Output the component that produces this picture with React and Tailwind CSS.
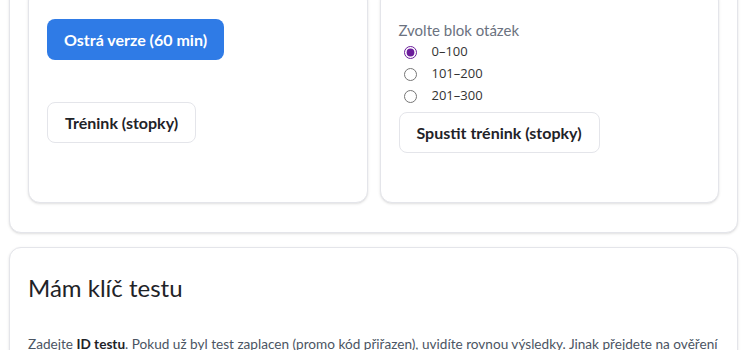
import React from "react";

export default function App() {
  return (
    <div className="min-h-[350px] w-[750px] overflow-hidden bg-white font-['Lato',_sans-serif] text-[#1f2328]">
      <div className="-mt-[30px] pl-[9px] pr-[12px]">
        <div className="rounded-xl border border-[#e4e5ea] bg-white p-[18px] pb-[29px] shadow-sm">
          <div className="grid grid-cols-2 gap-3">
            <div className="flex flex-col items-start rounded-xl border border-[#e4e5ea] bg-white p-[18px] pb-[49px] shadow-sm">
              <button className="mt-[11px] h-[41px] rounded-lg bg-[#2f7be6] px-[17px] text-base font-bold text-white">
                Ostrá verze (60 min)
              </button>
              <button className="mt-[42px] h-[41px] rounded-lg border border-[#e4e5ea] bg-white px-[17px] text-base font-bold text-[#1f2328]">
                Trénink (stopky)
              </button>
            </div>
            <div className="flex flex-col items-start rounded-xl border border-[#e4e5ea] bg-white p-[18px] pb-[49px] shadow-sm">
              <div className="mt-[12px] h-[20px] text-[15px] leading-[20px] text-[#6b7280]">
                Zvolte blok otázek
              </div>
              <div className="mt-[1px] flex flex-col font-['Open_Sans',_sans-serif] text-[13px] text-[#333]">
                {["0–100", "101–200", "201–300"].map((l, i) => (
                  <label key={l} className="flex h-[22px] items-center">
                    <input
                      type="radio"
                      name="blok"
                      defaultChecked={i === 0}
                      className="m-0 ml-[5px] h-[13px] w-[13px] accent-[#6b1d9b]"
                    />
                    <span className="ml-[15px]">{l}</span>
                  </label>
                ))}
              </div>
              <button className="mt-[5px] h-[41px] rounded-lg border border-[#e4e5ea] bg-white px-[17px] text-base font-bold text-[#1f2328]">
                Spustit trénink (stopky)
              </button>
            </div>
          </div>
        </div>
        <div className="mt-[14px] rounded-xl border border-[#e4e5ea] bg-white px-[18px] pt-[24px] pb-6 shadow-sm">
          <h2 className="text-2xl font-normal text-[#1f2328]">Mám klíč testu</h2>
          <p className="mt-[30px] text-[13.6px] leading-5 text-[#4b5563]">
            Zadejte <b className="font-bold text-[#1f2328]">ID testu</b>. Pokud už byl test zaplacen (promo kód přiřazen), uvidíte rovnou výsledky. Jinak přejdete na ověření platby.
          </p>
        </div>
      </div>
    </div>
  );
}
